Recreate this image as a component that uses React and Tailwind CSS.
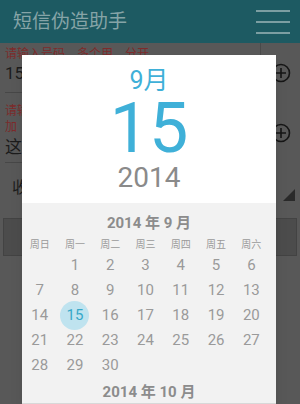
import React from "react";

const cjk = { fontFamily: 'Roboto, "Noto Sans CJK SC", sans-serif' };

const weekdays = ["周日", "周一", "周二", "周三", "周四", "周五", "周六"];

// September 2014 starts on a Monday
const days = [null, ...Array.from({ length: 30 }, (_, i) => i + 1)];

function PlusCircle() {
  return (
    <svg width="20" height="20" viewBox="0 0 20 20" className="text-[#161616]">
      <circle cx="10" cy="10" r="8.5" fill="none" stroke="currentColor" strokeWidth="1.6" />
      <path d="M10 5v10M5 10h10" stroke="currentColor" strokeWidth="1.6" />
    </svg>
  );
}

function Background() {
  return (
    <div className="w-[300px] h-[404px] bg-[#585858] flex flex-col">
      {/* Action bar */}
      <div className="h-[43px] bg-[#1d5a62] flex items-center justify-between pl-[13px] pr-[10px] shrink-0">
        <span className="text-[19px] text-[#86a4a7] leading-none">短信伪造助手</span>
        <div className="flex flex-col gap-[9px] w-[34px]">
          <div className="h-[2px] bg-[#7c9ea2]" />
          <div className="h-[2px] bg-[#7c9ea2]" />
          <div className="h-[2px] bg-[#7c9ea2]" />
        </div>
      </div>

      <div className="flex">
        <div className="flex-1 pl-[5px] pr-[4px] border-r border-[#4a4a4a]">
          <div className="pt-[4px] text-[12px] leading-[14px] text-[#7d2b2b]">请输入号码，多个用，分开</div>
          <div className="text-[17px] leading-[22px] text-[#1c1c1c] mt-[1px]">15</div>
          <div className="h-px bg-[#474747] mt-[8px]" />
          <div className="pt-[10px] text-[12px] leading-[16px] text-[#7d2b2b]">请输入内容</div>
          <div className="text-[12px] leading-[16px] text-[#7d2b2b]">加</div>
          <div className="text-[17px] leading-[24px] text-[#1c1c1c]">这</div>
          <div className="h-px bg-[#474747] mt-[3px]" />
        </div>
        <div className="w-[39px] flex flex-col items-center pt-[20px] gap-[40px]">
          <PlusCircle />
          <PlusCircle />
        </div>
      </div>

      <div className="flex items-end justify-between pl-[12px] pr-[5px] h-[44px]">
        <span className="text-[16px] text-[#1c1c1c] mb-[7px]">收</span>
        <svg width="12" height="12" viewBox="0 0 12 12" className="mb-[6px]">
          <path d="M12 0V12H0Z" fill="#2a2a2a" />
        </svg>
      </div>

      <div className="mx-[3px] mt-[11px] h-[38px] bg-[#4c4c4c] border border-[#434343]" />
    </div>
  );
}

function DatePicker() {
  return (
    <div className="absolute left-[22px] top-[55px] w-[254px] h-[349px] flex flex-col shadow-lg" style={cjk}>
      <div className="bg-white h-[148px] flex flex-col items-center shrink-0">
        <div className="text-[25px] leading-[25px] text-[#3fb0d8] mt-[13px]">9月</div>
        <div className="text-[70px] leading-[70px] text-[#3fb0d8]">15</div>
        <div className="text-[28px] leading-[28px] text-[#8a8a8a] mt-[1px]">2014</div>
      </div>
      <div className="bg-[#f2f2f2] flex-1 flex flex-col">
        <div className="text-center text-[15px] font-bold text-[#8c8c8c] leading-none mt-[13px]">2014 年 9 月</div>
        <div className="grid grid-cols-7 w-[247px] mt-[7px]">
          {weekdays.map((w) => (
            <div key={w} className="text-center text-[10px] leading-[14px] text-[#9a9a9a]">{w}</div>
          ))}
        </div>
        <div className="grid grid-cols-7 w-[247px] mt-[1px]">
          {days.map((d, i) => (
            <div key={i} className="h-[25px] flex items-center justify-center">
              {d === 15 ? (
                <div className="w-[29px] h-[29px] rounded-full bg-[#bfe3ef] flex items-center justify-center text-[15px] text-[#38a8c8]">15</div>
              ) : (
                <span className="text-[15px] text-[#9a9a9a]">{d}</span>
              )}
            </div>
          ))}
        </div>
        <div className="text-center text-[15px] font-bold text-[#8c8c8c] leading-none mt-[7px]">2014 年 10 月</div>
        <div className="h-px bg-[#d8d8d8] mt-[3px]" />
        <div className="flex-1 bg-white" />
      </div>
    </div>
  );
}

export default function App() {
  return (
    <div className="relative w-[300px] h-[404px] overflow-hidden" style={cjk}>
      <Background />
      <DatePicker />
    </div>
  );
}
